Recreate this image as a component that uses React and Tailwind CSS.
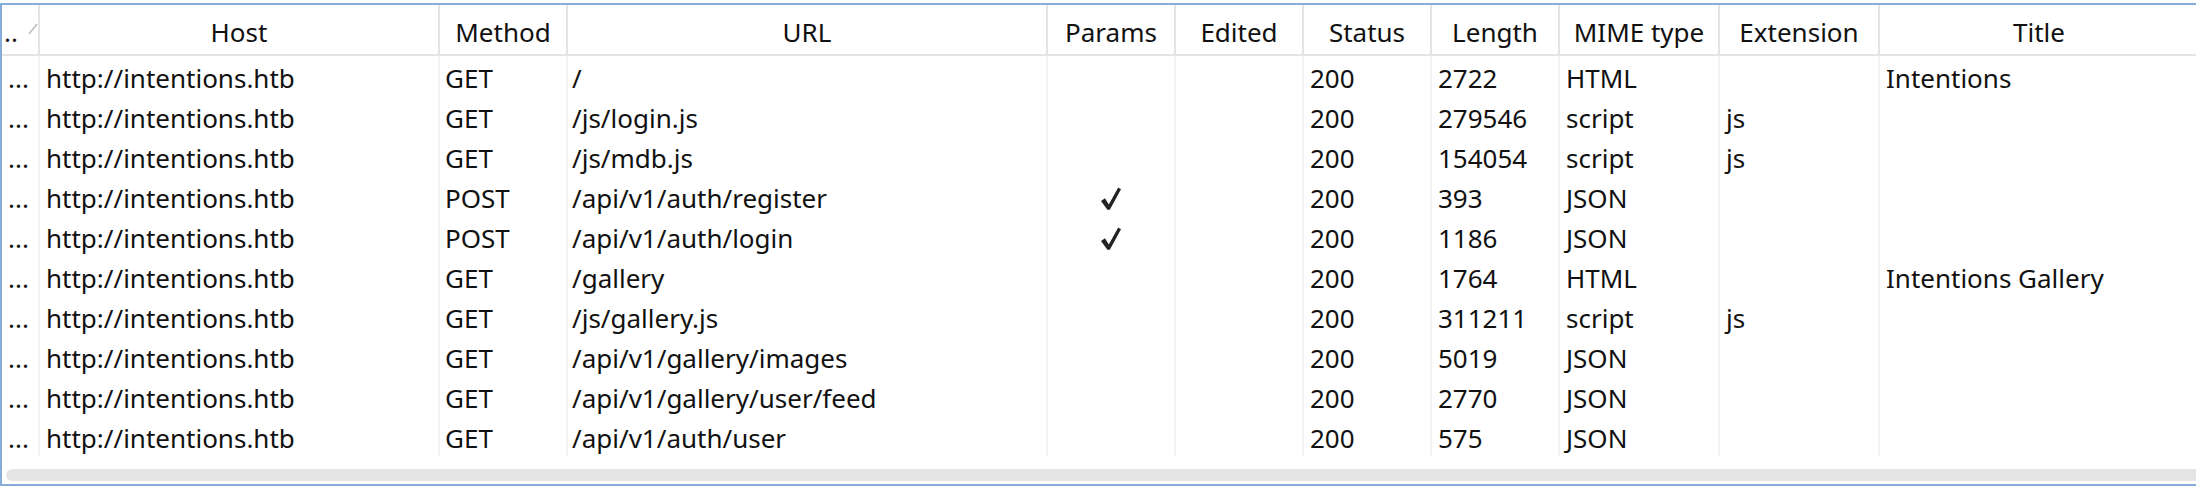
import React from 'react';

const columns = [
  { label: '..', w: 'w-[38px]' },
  { label: 'Host', w: 'w-[400px]' },
  { label: 'Method', w: 'w-[128px]' },
  { label: 'URL', w: 'w-[480px]' },
  { label: 'Params', w: 'w-[128px]' },
  { label: 'Edited', w: 'w-[128px]' },
  { label: 'Status', w: 'w-[128px]' },
  { label: 'Length', w: 'w-[128px]' },
  { label: 'MIME type', w: 'w-[160px]' },
  { label: 'Extension', w: 'w-[160px]' },
  { label: 'Title', w: 'w-[320px]' },
];

const rows = [
  ['GET', '/', false, '2722', 'HTML', '', 'Intentions'],
  ['GET', '/js/login.js', false, '279546', 'script', 'js', ''],
  ['GET', '/js/mdb.js', false, '154054', 'script', 'js', ''],
  ['POST', '/api/v1/auth/register', true, '393', 'JSON', '', ''],
  ['POST', '/api/v1/auth/login', true, '1186', 'JSON', '', ''],
  ['GET', '/gallery', false, '1764', 'HTML', '', 'Intentions Gallery'],
  ['GET', '/js/gallery.js', false, '311211', 'script', 'js', ''],
  ['GET', '/api/v1/gallery/images', false, '5019', 'JSON', '', ''],
  ['GET', '/api/v1/gallery/user/feed', false, '2770', 'JSON', '', ''],
  ['GET', '/api/v1/auth/user', false, '575', 'JSON', '', ''],
];

// heavy-ish check mark: thick short stroke, thinner long stroke
const Check = () => (
  <svg width="22" height="26" viewBox="0 0 22 26" className="text-[#222]">
    <path d="M1 15 L5 12.2 L8.8 18.4 L18.2 1.6 L21 3.2 L9.8 23.8 L7.4 23.8 Z" fill="currentColor" />
  </svg>
);

const Cell = ({ w, children, className = '' }) => (
  <div className={`${w} shrink-0 h-full border-r-2 border-[#f3f3f3] flex items-center pt-[5px] overflow-hidden whitespace-nowrap ${className}`}>
    {children}
  </div>
);

export default function App() {
  return (
    <div className="w-[2196px] h-[486px] bg-white pt-[3px] overflow-hidden font-['Noto_Sans',sans-serif] text-[26px] text-[#111]">
      <div className="h-[483px] border-l-2 border-t-2 border-b-2 border-[#86acda] flex flex-col">
        {/* header */}
        <div className="flex h-[51px] shrink-0 border-b-2 border-[#e4e4e4]">
          {columns.map((c, i) => (
            <div
              key={i}
              className={`${c.w} shrink-0 h-full border-r-2 border-[#e4e4e4] flex items-center pt-[5px] overflow-hidden whitespace-nowrap ${i === 0 ? 'justify-start pl-[2px]' : 'justify-center'}`}
            >
              {i === 0 ? (
                <>
                  <span>..</span>
                  <svg width="10" height="12" viewBox="0 0 10 12" className="ml-[10px] mt-[-6px]">
                    <path d="M1 11 L9 1" stroke="#bdbdbd" strokeWidth="1.6" />
                  </svg>
                </>
              ) : (
                c.label
              )}
            </div>
          ))}
        </div>

        {/* rows */}
        {rows.map((r, i) => (
          <div key={i} className="flex h-[40px] shrink-0">
            <Cell w="w-[38px]" className="pl-[6px]">...</Cell>
            <Cell w="w-[400px]" className="pl-[6px]">http://intentions.htb</Cell>
            <Cell w="w-[128px]" className="pl-[5px]">{r[0]}</Cell>
            <Cell w="w-[480px]" className="pl-[4px]">{r[1]}</Cell>
            <Cell w="w-[128px]" className="justify-center pt-0">{r[2] && <Check />}</Cell>
            <Cell w="w-[128px]"></Cell>
            <Cell w="w-[128px]" className="pl-[6px]">200</Cell>
            <Cell w="w-[128px]" className="pl-[6px]">{r[3]}</Cell>
            <Cell w="w-[160px]" className="pl-[6px]">{r[4]}</Cell>
            <Cell w="w-[160px]" className="pl-[6px]">{r[5]}</Cell>
            <Cell w="w-[320px]" className="pl-[6px]">{r[6]}</Cell>
          </div>
        ))}

        <div className="h-[13px] shrink-0" />
        {/* horizontal scrollbar */}
        <div className="h-[12px] shrink-0 pl-[4px]">
          <div className="h-full w-[2300px] rounded-full bg-[#e4e4e4]" />
        </div>
      </div>
    </div>
  );
}
